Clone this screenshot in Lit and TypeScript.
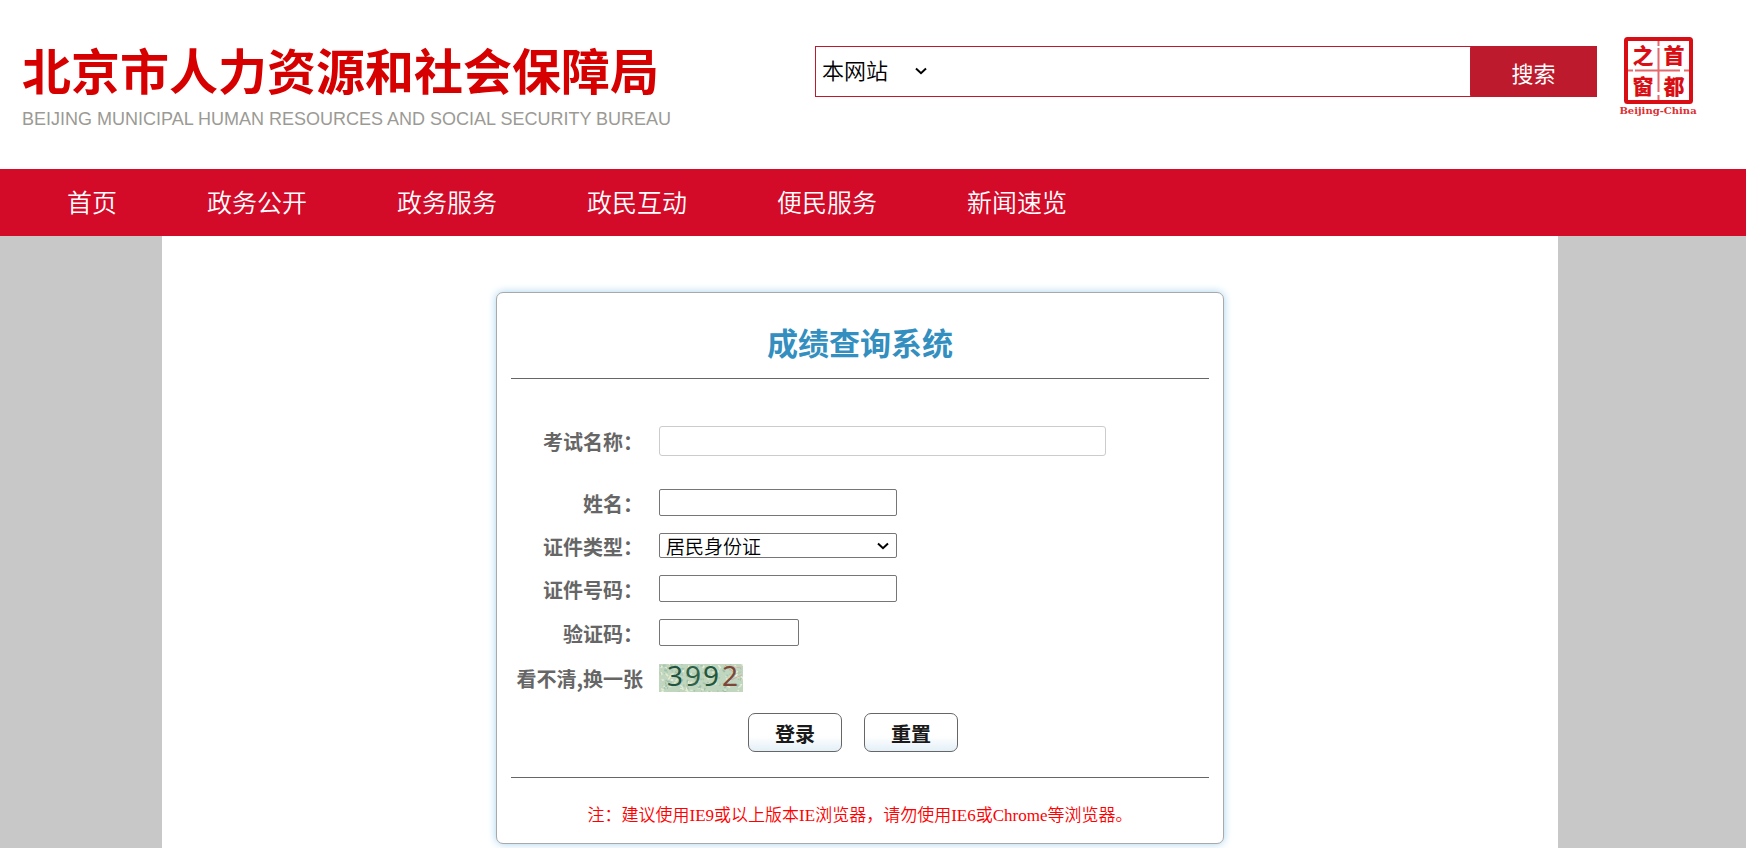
import { LitElement, html, css, svg } from "lit";
import { customElement, state } from "lit/decorators.js";

const NAV = ["首页", "政务公开", "政务服务", "政民互动", "便民服务", "新闻速览"];

/* Drop-down arrow shared by both selects. */
const arrow = css`url("data:image/svg+xml,%3Csvg xmlns='http://www.w3.org/2000/svg' width='12' height='8' viewBox='0 0 12 8'%3E%3Cpath d='M1 1.500l5 4.700 5-4.700' fill='none' stroke='%23000' stroke-width='2'/%3E%3C/svg%3E")`;

/* Small seeded generator, so that the captcha texture is stable. */
function noise(seed: number) {
  let s = seed;
  return () => {
    s = (s * 1103515245 + 12345) % 2147483648;
    return s / 2147483648;
  };
}

@customElement("captcha-image")
class CaptchaImage extends LitElement {
  static styles = css`
    :host { display: block; width: 84px; height: 28px; }
    .image { display: block; width: 100%; height: 100%; overflow: visible; }
    .digit { font: 28px "Noto Sans", sans-serif; }
  `;

  render() {
    const r = noise(3992);
    const tones = ["#a3c4ac", "#b4ccb4", "#e6ecd0", "#dfe8d6", "#a6c6b4", "#eef1dc", "#c0d3bb", "#9dbfaa"];
    const strokes = Array.from({ length: 260 }, (_, i) => {
      const x = r() * 84;
      const y = r() * 28;
      const dx = r() * 6 - 3;
      const dy = r() * 5 - 2;
      return svg`<path d="M${x.toFixed(1)} ${y.toFixed(1)}l${dx.toFixed(1)} ${dy.toFixed(1)}" stroke=${tones[i % tones.length]} stroke-width="1.5"/>`;
    });
    return html`
      <svg class="image" viewBox="0 0 84 28" role="img" aria-label="验证码图片">
        <svg width="84" height="28">
          <rect width="84" height="28" fill="#c0d6bf"/>
          ${strokes}
          <path d="M66 1l8 7M72 16l11 -5M70 2l12 2" stroke="#d9a08e" fill="none" opacity=".7"/>
        </svg>
        <text class="digit" x="8" y="22" fill="#1f5440">3</text>
        <text class="digit" x="26" y="22" fill="#2f6048">9</text>
        <text class="digit" x="44" y="22" fill="#24563c">9</text>
        <text class="digit" x="63" y="22" fill="#7d4638">2</text>
      </svg>
    `;
  }
}

@customElement("capital-seal")
class CapitalSeal extends LitElement {
  static styles = css`
    :host { display: block; width: 77px; height: 82px; margin-top: 2px; }
    svg { display: block; width: 100%; height: 100%; overflow: visible; }
    .glyph {
      font: 900 21px "Noto Sans CJK SC", sans-serif;
      text-anchor: middle;
      fill: #d90e14;
    }
    .latin {
      font: bold 10px "DejaVu Serif", serif;
      text-anchor: middle;
      fill: #dc3034;
    }
  `;

  render() {
    return html`
      <svg viewBox="0 0 77 82" role="img" aria-label="首都之窗">
        <rect x="6" y="2" width="65" height="63" rx="1.5" fill="#fff" stroke="#d90e14" stroke-width="4"/>
        <path d="M38.500 4V9M38.500 11V55M38.500 58V63M8 33.500H13M15 33.500H60M64 33.500H69" stroke="#e46a6d" stroke-width="2" fill="none"/>
        <text class="glyph" x="23" y="26">之</text>
        <text class="glyph" x="54" y="26">首</text>
        <text class="glyph" x="23" y="57">窗</text>
        <text class="glyph" x="54" y="57">都</text>
        <text class="latin" x="38" y="77">Beijing-China</text>
      </svg>
    `;
  }
}

@customElement("site-header")
class SiteHeader extends LitElement {
  static styles = css`
    :host { display: block; font-family: "Noto Sans CJK SC", sans-serif; }
    .top {
      display: grid;
      grid-template-columns: minmax(0, 385fr) minmax(0, 391fr) auto;
      column-gap: 23px;
      align-items: start;
      padding: 35px 49px 0 22px;
      height: 134px;
      background: #fff;
    }
    .brand { color: inherit; text-decoration: none; white-space: nowrap; display: block; }
    .name {
      display: block;
      font-size: 49px;
      line-height: 68px;
      font-weight: 700;
      color: #d70000;
    }
    .latin {
      display: block;
      font: 18px/32px "Liberation Sans", sans-serif;
      color: #9b9a94;
    }
    .search {
      display: flex;
      margin-top: 11px;
      height: 51px;
      box-sizing: border-box;
      border: 1px solid #bd1a2d;
    }
    .scope {
      appearance: none;
      width: 116px;
      height: 49px;
      border: 0;
      border-radius: 0;
      background: ${arrow} no-repeat 99px 20px;
      color: #000;
      font: 350 22px/42px "Noto Sans CJK SC", sans-serif;
      padding: 0 0 6px 6px;
    }
    .query {
      flex: 1;
      min-width: 0;
      border: 0;
      outline: 0;
      padding: 0 8px;
      font: 22px "Noto Sans CJK SC", sans-serif;
    }
    .go {
      width: 127px;
      margin: -1px;
      padding: 0;
      border: 0;
      border-radius: 2px;
      background: #bd1a2d;
      color: #fff;
      font: 22px "Noto Sans CJK SC", sans-serif;
    }
    .nav {
      display: flex;
      align-items: center;
      gap: 90px;
      height: 67px;
      padding: 0 67px;
      background: #d40a29;
    }
    .item {
      padding-bottom: 4px;
      color: #fff;
      text-decoration: none;
      font-size: 25px;
      line-height: 36px;
      font-weight: 350;
      white-space: nowrap;
    }
  `;

  render() {
    return html`
      <header class="top">
        <a class="brand" href="#">
          <span class="name">北京市人力资源和社会保障局</span>
          <span class="latin">BEIJING MUNICIPAL HUMAN RESOURCES AND SOCIAL SECURITY BUREAU</span>
        </a>
        <form class="search" role="search" @submit=${(e: Event) => e.preventDefault()}>
          <select class="scope" aria-label="搜索范围"><option>本网站</option></select>
          <input class="query" type="text" aria-label="搜索内容">
          <button class="go" type="submit">搜索</button>
        </form>
        <capital-seal></capital-seal>
      </header>
      <nav class="nav">
        ${NAV.map((t) => html`<a class="item" href="#">${t}</a>`)}
      </nav>
    `;
  }
}

@customElement("score-form")
class ScoreForm extends LitElement {
  @state() private draws = 0;

  static styles = css`
    :host { display: block; font-family: "Noto Sans CJK SC", sans-serif; }
    .card {
      box-sizing: border-box;
      max-width: 728px;
      margin: 0 auto;
      padding: 0 14px;
      border: 1px solid #a9a9a9;
      border-radius: 7px;
      background: #fff;
      box-shadow: 0 0 8px #a5d3ee;
    }
    .title {
      margin: 0;
      padding: 25px 0 12px;
      border-bottom: 1px solid #666;
      font-size: 31px;
      line-height: 48px;
      font-weight: 700;
      text-align: center;
      color: #338fbf;
    }
    .fields {
      display: grid;
      grid-template-columns: 132px minmax(0, 1fr);
      grid-template-rows: 80px repeat(3, 43px) repeat(2, 45px);
      column-gap: 16px;
      align-items: center;
      padding-top: 22px;
    }
    .label {
      padding: 2px 0 0;
      border: 0;
      background: none;
      text-align: right;
      white-space: nowrap;
      font: 700 20px/28px "Noto Sans CJK SC", sans-serif;
      color: #666;
    }
    .refresh { justify-self: end; cursor: pointer; }
    .box {
      box-sizing: border-box;
      width: 238px;
      height: 27px;
      margin: 0;
      padding: 1px 4px;
      border: 1px solid #767676;
      border-radius: 2px;
      background: #fff;
      color: #000;
      font: 18px "Noto Sans CJK SC", sans-serif;
    }
    .exam { width: 447px; max-width: 100%; height: 30px; border-color: #ccc; border-radius: 3px; }
    .code { width: 140px; }
    .type {
      appearance: none;
      height: 25px;
      padding: 0 24px 0 6px;
      background: #fff ${arrow} no-repeat right 7px top 8px;
      font-size: 19px;
      line-height: 22px;
      font-weight: 350;
    }
    .actions { display: flex; gap: 22px; padding: 13px 0 25px 237px; }
    .action {
      width: 94px;
      height: 39px;
      padding: 2px 0 0;
      border: 1px solid #666;
      border-radius: 7px;
      background: linear-gradient(#fff 60%, #e3eff7);
      color: #1a1a1a;
      font: 700 20px "Noto Sans CJK SC", sans-serif;
    }
    .note {
      margin: 0;
      padding: 25px 0 14px;
      border-top: 1px solid #666;
      text-align: center;
      font: 350 17px/26px "Liberation Serif", "Noto Sans CJK SC", serif;
      color: #f00;
    }
  `;

  render() {
    return html`
      <form class="card" @submit=${(e: Event) => e.preventDefault()}>
        <h1 class="title">成绩查询系统</h1>
        <div class="fields">
          <label class="label" for="exam">考试名称：</label>
          <input class="box exam" id="exam" type="text">
          <label class="label" for="name">姓名：</label>
          <input class="box" id="name" type="text">
          <label class="label" for="type">证件类型：</label>
          <select class="box type" id="type"><option>居民身份证</option></select>
          <label class="label" for="number">证件号码：</label>
          <input class="box" id="number" type="text">
          <label class="label" for="code">验证码：</label>
          <input class="box code" id="code" type="text">
          <button class="label refresh" type="button" @click=${() => (this.draws += 1)}>看不清,换一张</button>
          <captcha-image></captcha-image>
        </div>
        <div class="actions">
          <button class="action" type="submit">登录</button>
          <button class="action" type="reset">重置</button>
        </div>
        <p class="note">注：建议使用IE9或以上版本IE浏览器，请勿使用IE6或Chrome等浏览器。</p>
      </form>
    `;
  }
}

@customElement("app-root")
class AppRoot extends LitElement {
  static styles = css`
    :host {
      display: flex;
      flex-direction: column;
      min-height: 100vh;
      background: #c8c8c8;
    }
    .page {
      flex: 1;
      margin: 0 188px 0 162px;
      padding: 56px 0 4px;
      background: #fff;
    }
  `;

  render() {
    return html`
      <site-header></site-header>
      <main class="page"><score-form></score-form></main>
    `;
  }
}
